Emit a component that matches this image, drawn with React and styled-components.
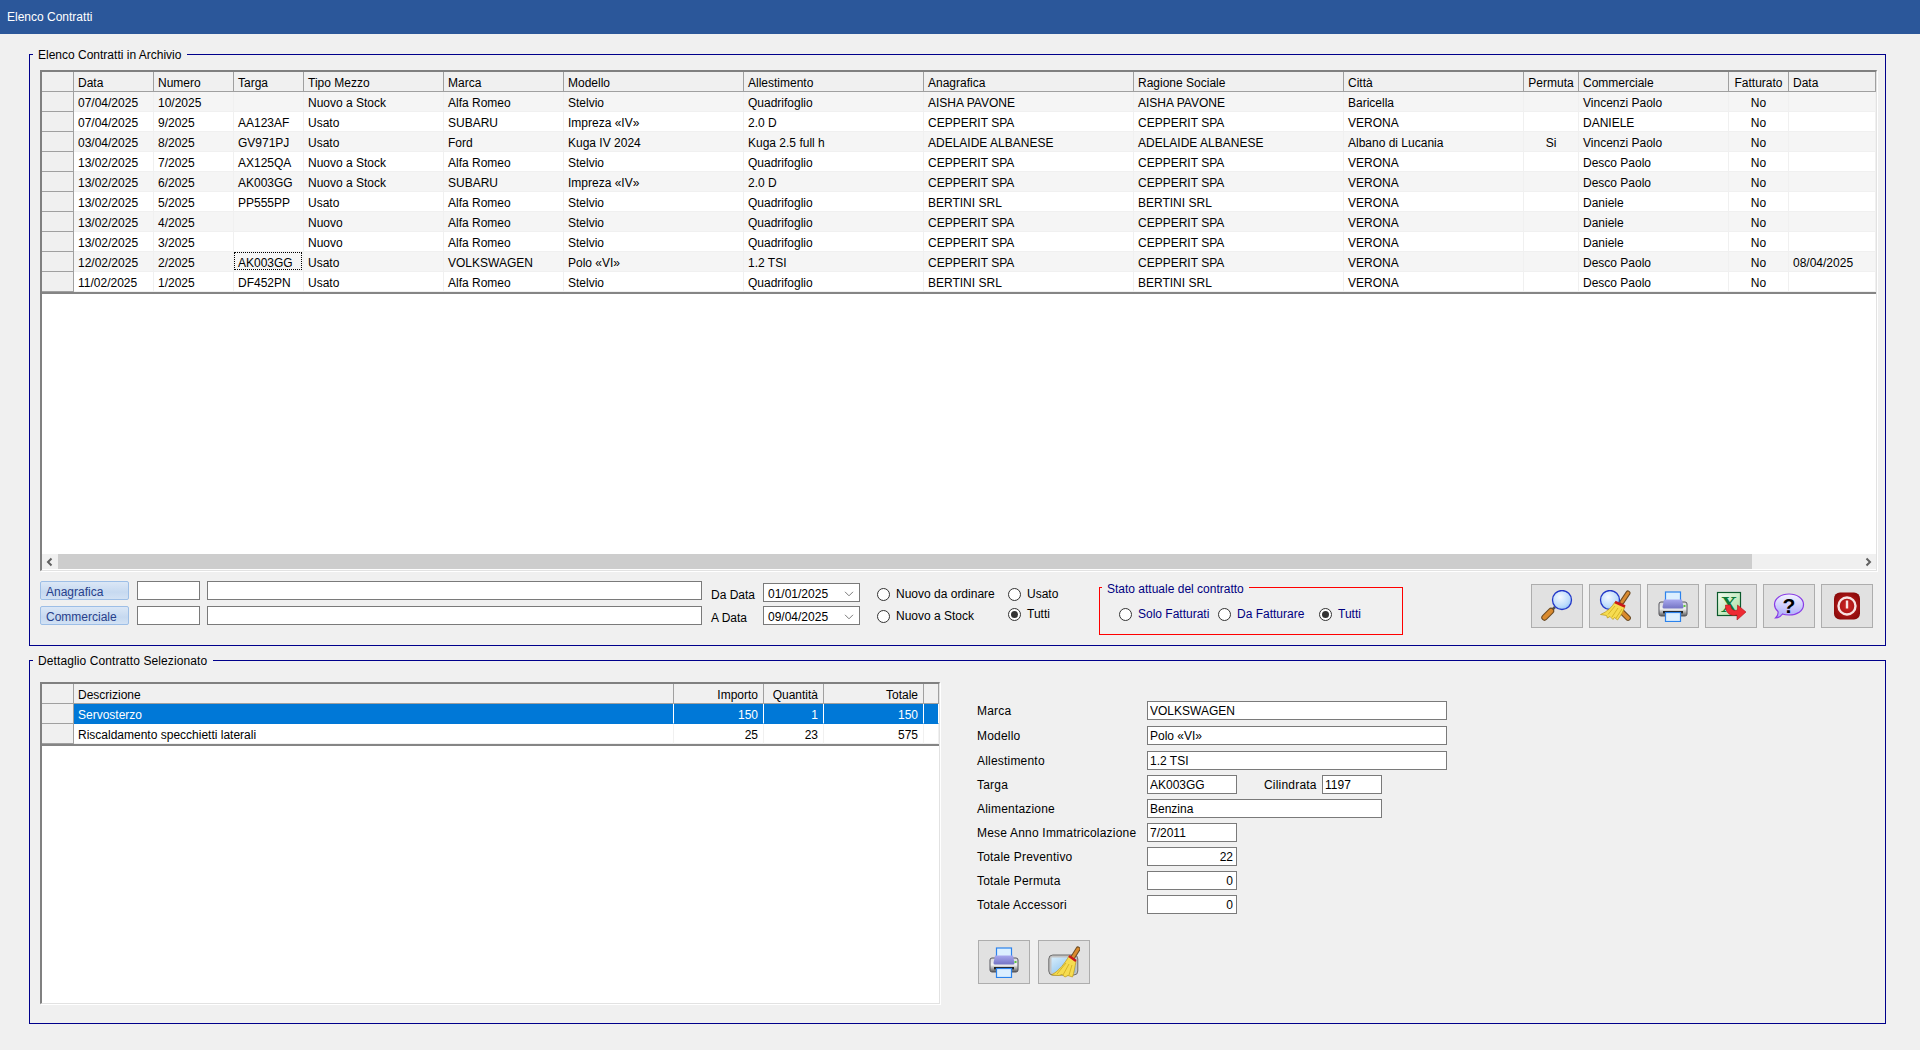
import React from "react";
import styled, { createGlobalStyle } from "styled-components";

const Global = createGlobalStyle`
  html, body { margin: 0; padding: 0; background: #f0f0f0; }
  body { font-family: "Liberation Sans", Arial, sans-serif; font-size: 12px; color: #000; }
  * { box-sizing: border-box; }
`;

const Page = styled.div`
  width: 1920px;
  height: 1050px;
  overflow: hidden;
  display: flex;
  flex-direction: column;
  background: #f0f0f0;
`;
const TitleBar = styled.header`
  height: 34px;
  flex: none;
  background: #2b579a;
  color: #fff;
  display: flex;
  align-items: center;
  padding-left: 7px;
  font-size: 12px;
`;
const Body = styled.main`
  padding: 13px 34px 0 29px;
  display: flex;
  flex-direction: column;
  gap: 7px;
`;
const Group = styled.fieldset`
  margin: 0;
  min-width: 0;
  border: 1px solid #00008b;
  padding: ${(p) => p.$pad};
`;
const GroupLegend = styled.legend`
  margin-left: -7px;
  padding: 0 6px 0 5px;
  height: 14px;
  line-height: 17px;
  white-space: nowrap;
  letter-spacing: ${(p) => p.$ls || 0}px;
`;

/* data grid */
const Frame = styled.div`
  width: ${(p) => p.$w}px;
  height: ${(p) => p.$h}px;
  background: #fff;
  border-top: 2px solid #808080;
  border-left: 2px solid #808080;
  border-right: 1px solid #e2e2e2;
  border-bottom: 1px solid #e2e2e2;
  box-shadow: 1px 1px 0 #fff;
  display: flex;
  flex-direction: column;
  flex: none;
`;
const Rows = styled.div`
  flex: 1;
  min-height: 0;
  overflow: hidden;
`;
const RowLine = styled.div`
  display: grid;
  grid-template-columns: ${(p) => p.$cols};
  height: 20px;
  background: ${(p) => p.$bg};
  color: ${(p) => p.$fg || "#000"};
`;
const EndLine = styled.div`
  height: 2px;
  background: #858585;
`;
const HeadCell = styled.div`
  background: #f0f0f0;
  border-right: 1px solid #a0a0a0;
  border-bottom: 1px solid #a0a0a0;
  padding: 2px ${(p) => (p.$align === "right" ? 5 : 4)}px 0 4px;
  line-height: 18px;
  white-space: nowrap;
  overflow: hidden;
  text-align: ${(p) => p.$align || "left"};
`;
const RowHead = styled.div`
  background: #f0f0f0;
  border-right: 1px solid #a0a0a0;
  border-bottom: 1px solid #a0a0a0;
`;
const Cell = styled.div`
  position: relative;
  border-right: 1px solid ${(p) => (p.$selected ? "#fff" : "#f0f0f0")};
  border-bottom: 1px solid ${(p) => (p.$selected ? "#0078d7" : "#f0f0f0")};
  padding: 2px ${(p) => (p.$align === "right" ? 5 : 4)}px 0 4px;
  line-height: 18px;
  white-space: nowrap;
  overflow: hidden;
  text-align: ${(p) => p.$align || "left"};
  &::after {
    content: "";
    display: ${(p) => (p.$focus ? "block" : "none")};
    position: absolute;
    inset: 0 1px 1px 0;
    border: 1px dotted #000;
  }
`;
const ScrollBar = styled.div`
  flex: none;
  height: 15px;
  margin-bottom: 1px;
  background: #f0f0f0;
  display: flex;
`;
const ScrollArrow = styled.div`
  width: 16px;
  flex: none;
  display: flex;
  align-items: center;
  justify-content: center;
  color: #606060;
`;
const Thumb = styled.div`
  width: 1694px;
  background: #cdcdcd;
`;
const Track = styled.div`
  flex: 1;
`;

/* filter bar */
const FilterBar = styled.div`
  display: flex;
  align-items: flex-start;
  margin-top: 10px;
  height: 47px;
`;
const FilterFields = styled.div`
  display: grid;
  grid-template-columns: 90px 63px 495px;
  column-gap: 7px;
  row-gap: 6px;
  grid-auto-rows: 19px;
  flex: none;
`;
const BlueButton = styled.button`
  font: inherit;
  width: 89px;
  height: 19px;
  padding: 2px 0 0 5px;
  text-align: left;
  color: #27408b;
  background: linear-gradient(#dbe7f6, #c6d9f0 60%, #d3e2f4);
  border: 1px solid #9dbee6;
  border-radius: 2px;
`;
const TextBox = styled.input`
  font: inherit;
  color: #000;
  width: ${(p) => (p.$w ? `${p.$w}px` : "100%")};
  height: 19px;
  padding: 1px 3px 0 2px;
  background: #fff;
  border: 1px solid #7a7a7a;
  border-radius: 0;
  outline: none;
  text-align: ${(p) => p.$align || "left"};
`;
const DateGrid = styled.div`
  display: grid;
  grid-template-columns: 52px 97px;
  grid-auto-rows: 19px;
  row-gap: 4px;
  margin: 2px 0 0 9px;
  flex: none;
`;
const DateLabel = styled.label`
  padding-top: 5px;
  line-height: 14px;
  white-space: nowrap;
`;
const DateBox = styled.div`
  background: #fff;
  border: 1px solid #7a7a7a;
  display: flex;
  align-items: center;
  justify-content: space-between;
  padding: 2px 5px 0 4px;
  color: #7a7a7a;
`;
const DateValue = styled.span`
  color: #000;
`;
const RadioColumn = styled.div`
  display: flex;
  flex-direction: column;
  gap: ${(p) => p.$gap}px;
  width: ${(p) => p.$w}px;
  margin: 6px 0 0 ${(p) => p.$ml || 0}px;
  flex: none;
`;
const RadioItem = styled.label`
  display: flex;
  align-items: center;
  gap: 6px;
  height: 14px;
  white-space: nowrap;
  color: ${(p) => p.$color || "#000"};
`;
const Radio = styled.input.attrs({ type: "radio" })`
  appearance: none;
  margin: 0;
  flex: none;
  width: 13px;
  height: 13px;
  border-radius: 50%;
  border: 1px solid #333;
  background: #fff;
  display: grid;
  place-items: center;
  &::before {
    content: "";
    width: 7px;
    height: 7px;
    border-radius: 50%;
    background: transparent;
  }
  &:checked::before {
    background: #333;
  }
`;
const StatusBox = styled.fieldset`
  margin: 0 0 0 22px;
  width: 304px;
  height: 54px;
  padding: 14px 0 0 19px;
  min-width: 0;
  flex: none;
  border: 1px solid #ff0000;
`;
const StatusLegend = styled.legend`
  margin-left: -17px;
  padding: 0 5px;
  height: 12px;
  line-height: 16px;
  color: #000080;
  white-space: nowrap;
`;
const StatusRadios = styled.div`
  display: grid;
  grid-template-columns: 99px 101px auto;
`;
const ButtonRow = styled.div`
  display: flex;
  gap: ${(p) => p.$gap}px;
  flex: none;
`;
const ActionRow = styled(ButtonRow)`
  margin: 3px 4px 0 auto;
`;
const IconButton = styled.button`
  width: 52px;
  height: 44px;
  padding: 0;
  background: #e1e1e1;
  border: 1px solid #adadad;
  display: flex;
  align-items: center;
  justify-content: center;
  flex: none;
`;

/* detail */
const DetailRow = styled.div`
  display: flex;
  align-items: flex-start;
  gap: 37px;
`;
const Form = styled.div`
  margin-top: 19px;
  display: flex;
  flex-direction: column;
  gap: 5px;
`;
const FormRow = styled.div`
  display: flex;
  align-items: center;
  height: 19px;
  margin-bottom: ${(p) => (p.$extra ? "1px" : "0")};
`;
const FormLabel = styled.label`
  width: ${(p) => p.$w}px;
  margin-left: ${(p) => p.$ml || 0}px;
  flex: none;
  white-space: nowrap;
  letter-spacing: 0.2px;
`;
const FormButtons = styled(ButtonRow)`
  margin-top: 21px;
  margin-left: 1px;
`;

/* icons */
const Handle = ({ x1, y1, x2, y2, w = 5 }) => (
  <g strokeLinecap="round">
    <line x1={x1} y1={y1} x2={x2} y2={y2} stroke="#6b4a22" strokeWidth={w + 1.4} />
    <line x1={x1} y1={y1} x2={x2} y2={y2} stroke="#d98a2e" strokeWidth={w - 0.6} />
  </g>
);
const Glass = ({ cx, cy, r = 9.5 }) => (
  <g>
    <defs>
      <radialGradient id="glassFill" cx="0.4" cy="0.35" r="0.7">
        <stop offset="0" stopColor="#f4f9ff" />
        <stop offset="0.7" stopColor="#bcdcfc" />
        <stop offset="1" stopColor="#8fc2f8" />
      </radialGradient>
    </defs>
    <circle cx={cx} cy={cy} r={r} fill="url(#glassFill)" stroke="#2338c8" strokeWidth="1.3" />
  </g>
);
const Bristles = ({ d }) => (
  <g>
    <path d={d} fill="#f6dc50" stroke="#bb9612" strokeWidth="0.7" strokeLinejoin="round" />
  </g>
);
const SearchIcon = () => (
  <svg width="32" height="32" viewBox="0 0 32 32">
    <line x1="14" y1="17" x2="11" y2="20" stroke="#555" strokeWidth="2.5" />
    <Handle x1="10" y1="21" x2="3.5" y2="27.5" w={5} />
    <Glass cx={21} cy={10} />
  </svg>
);
const ClearSearchIcon = () => (
  <svg width="32" height="32" viewBox="0 0 32 32">
    <Handle x1="22" y1="21" x2="29" y2="28" w={4.4} />
    <Glass cx={11} cy={10} />
    <Handle x1="23" y1="12" x2="29" y2="3" w={3.6} />
    <Bristles d="M16 12 L26 16.5 C24 22 21.5 26 18.5 30 L15.5 27.5 L14 29.5 L11 26.5 L8.5 28 L7.5 25.5 L1.5 24.5 C8 22 13 17 16 12 Z" />
    <path d="M9 24.5 L16 16 M13 27 L19 18 M17 28 L23 19" stroke="#c9a416" strokeWidth="0.7" fill="none" />
    <line x1="16" y1="12" x2="26" y2="16.5" stroke="#c81818" strokeWidth="2.6" />
  </svg>
);
const PrinterIcon = () => (
  <svg width="32" height="32" viewBox="0 0 32 32">
    <defs>
      <linearGradient id="prnBody" x1="0" y1="0" x2="0" y2="1">
        <stop offset="0" stopColor="#d8d8dc" />
        <stop offset="0.5" stopColor="#f2f2f2" />
        <stop offset="1" stopColor="#585858" />
      </linearGradient>
      <linearGradient id="prnTop" x1="0" y1="0" x2="0" y2="1">
        <stop offset="0" stopColor="#a8a8ee" />
        <stop offset="1" stopColor="#7474c4" />
      </linearGradient>
    </defs>
    <rect x="8.5" y="2" width="15" height="11" fill="#dcefff" stroke="#2b82ec" strokeWidth="1.2" />
    <rect x="2" y="12" width="28" height="14" rx="2" fill="url(#prnBody)" stroke="#55555c" strokeWidth="1" />
    <path d="M7 9.5 H25 L26.5 17 Q26.5 18.5 25 18.5 H7 Q5.5 18.5 5.5 17 Z" fill="url(#prnTop)" />
    <rect x="6" y="21" width="20" height="2.4" fill="#222" />
    <rect x="8.5" y="22.5" width="15" height="9" fill="#dcefff" stroke="#2b82ec" strokeWidth="1.2" />
    <rect x="26.5" y="15" width="2" height="2" fill="#5ac83c" />
  </svg>
);
const ExcelIcon = () => (
  <svg width="32" height="32" viewBox="0 0 32 32">
    <defs>
      <linearGradient id="xlsBg" x1="0" y1="0" x2="1" y2="1">
        <stop offset="0" stopColor="#f2fbf0" />
        <stop offset="1" stopColor="#a6dd9c" />
      </linearGradient>
    </defs>
    <rect x="2.5" y="2.5" width="23" height="23" fill="url(#xlsBg)" stroke="#0b5a2c" strokeWidth="1.2" />
    <text x="14" y="22" textAnchor="middle" fontFamily="'Liberation Serif', serif" fontWeight="700" fontSize="23" fill="#0a7a36">X</text>
    <path d="M10.5 15 C10 22 15 27 22 25 L22 30 L31 22 L22.5 15 L22.5 20 C18 21.5 16 19 15.5 15 Z" fill="#ee2a32" stroke="#b0141c" strokeWidth="0.6" strokeLinejoin="round" />
  </svg>
);
const HelpIcon = () => (
  <svg width="32" height="32" viewBox="0 0 32 32">
    <defs>
      <linearGradient id="helpBg" x1="0" y1="0" x2="0" y2="1">
        <stop offset="0" stopColor="#f4f4ff" />
        <stop offset="1" stopColor="#a7a7fa" />
      </linearGradient>
    </defs>
    <path d="M16 4 C24 4 30.5 8.5 30.5 14.5 C30.5 21 24 25 16 25 C13.5 25 11.5 24.8 9.5 24 C8 26 5.5 28 2.5 28 C4.5 26 5.5 24 5 21.5 C2.8 19.5 1.5 17 1.5 14.5 C1.5 8.5 8 4 16 4 Z" fill="url(#helpBg)" stroke="#8a3ce6" strokeWidth="1.2" />
    <text x="16" y="22.5" textAnchor="middle" fontFamily="'Liberation Sans', sans-serif" fontWeight="700" fontSize="21" fill="#000">?</text>
  </svg>
);
const PowerIcon = () => (
  <svg width="32" height="32" viewBox="0 0 32 32">
    <defs>
      <radialGradient id="pwrBg" cx="0.5" cy="0.5" r="0.7">
        <stop offset="0" stopColor="#cf2424" />
        <stop offset="1" stopColor="#7d0505" />
      </radialGradient>
    </defs>
    <rect x="3" y="2.5" width="26" height="27" rx="6" fill="url(#pwrBg)" />
    <circle cx="16" cy="16" r="8.5" fill="none" stroke="#f8e4e4" strokeWidth="2.4" />
    <line x1="16" y1="10.5" x2="16" y2="18.5" stroke="#f8e4e4" strokeWidth="2.4" />
  </svg>
);
const CleanIcon = () => (
  <svg width="32" height="32" viewBox="0 0 32 32">
    <defs>
      <linearGradient id="scr" x1="0" y1="0" x2="1" y2="1">
        <stop offset="0" stopColor="#d6ecfb" />
        <stop offset="1" stopColor="#7fbcec" />
      </linearGradient>
    </defs>
    <rect x="0.8" y="9" width="29" height="20" rx="4" fill="#c4c4c4" stroke="#6c6c6c" strokeWidth="1" />
    <rect x="3.5" y="11.5" width="24" height="15" fill="url(#scr)" />
    <Handle x1="25" y1="11" x2="30" y2="3" w={3.6} />
    <Bristles d="M21 10 L28 15 C27 21 26 27 24.5 31 L20 29.5 L17 31 L14 28.5 L11 29.5 L3.5 29 C11 25 17 17 21 10 Z" />
    <path d="M9 28 L18 17 M15 29 L21 18 M21 29 L24 19" stroke="#c9a416" strokeWidth="0.7" fill="none" />
    <line x1="21" y1="10" x2="28" y2="15" stroke="#c81818" strokeWidth="2.4" />
  </svg>
);
const ArrowL = () => (
  <svg width="10" height="10" viewBox="0 0 10 10"><path d="M6.5 1.5 L3 5 L6.5 8.5" fill="none" stroke="currentColor" strokeWidth="2" /></svg>
);
const ArrowR = () => (
  <svg width="10" height="10" viewBox="0 0 10 10"><path d="M3.5 1.5 L7 5 L3.5 8.5" fill="none" stroke="currentColor" strokeWidth="2" /></svg>
);
const Chevron = () => (
  <svg width="10" height="6" viewBox="0 0 10 6"><path d="M1 0.8 L5 4.8 L9 0.8" fill="none" stroke="currentColor" strokeWidth="1" /></svg>
);

/* data */
const MAIN_COLS = "32px 80px 80px 70px 140px 120px 180px 180px 210px 210px 180px 55px 150px 60px 1fr";
const MAIN_HEAD = ["Data", "Numero", "Targa", "Tipo Mezzo", "Marca", "Modello", "Allestimento", "Anagrafica", "Ragione Sociale", "Città", "Permuta", "Commerciale", "Fatturato", "Data"];
const MAIN_ALIGN = { 10: "center", 12: "center" };
const MAIN_ROWS = [
  ["07/04/2025", "10/2025", "", "Nuovo a Stock", "Alfa Romeo", "Stelvio", "Quadrifoglio", "AISHA PAVONE", "AISHA PAVONE", "Baricella", "", "Vincenzi Paolo", "No", ""],
  ["07/04/2025", "9/2025", "AA123AF", "Usato", "SUBARU", "Impreza «IV»", "2.0 D", "CEPPERIT SPA", "CEPPERIT SPA", "VERONA", "", "DANIELE", "No", ""],
  ["03/04/2025", "8/2025", "GV971PJ", "Usato", "Ford", "Kuga IV 2024", "Kuga 2.5 full h", "ADELAIDE ALBANESE", "ADELAIDE ALBANESE", "Albano di Lucania", "Si", "Vincenzi Paolo", "No", ""],
  ["13/02/2025", "7/2025", "AX125QA", "Nuovo a Stock", "Alfa Romeo", "Stelvio", "Quadrifoglio", "CEPPERIT SPA", "CEPPERIT SPA", "VERONA", "", "Desco Paolo", "No", ""],
  ["13/02/2025", "6/2025", "AK003GG", "Nuovo a Stock", "SUBARU", "Impreza «IV»", "2.0 D", "CEPPERIT SPA", "CEPPERIT SPA", "VERONA", "", "Desco Paolo", "No", ""],
  ["13/02/2025", "5/2025", "PP555PP", "Usato", "Alfa Romeo", "Stelvio", "Quadrifoglio", "BERTINI SRL", "BERTINI SRL", "VERONA", "", "Daniele", "No", ""],
  ["13/02/2025", "4/2025", "", "Nuovo", "Alfa Romeo", "Stelvio", "Quadrifoglio", "CEPPERIT SPA", "CEPPERIT SPA", "VERONA", "", "Daniele", "No", ""],
  ["13/02/2025", "3/2025", "", "Nuovo", "Alfa Romeo", "Stelvio", "Quadrifoglio", "CEPPERIT SPA", "CEPPERIT SPA", "VERONA", "", "Daniele", "No", ""],
  ["12/02/2025", "2/2025", "AK003GG", "Usato", "VOLKSWAGEN", "Polo «VI»", "1.2 TSI", "CEPPERIT SPA", "CEPPERIT SPA", "VERONA", "", "Desco Paolo", "No", "08/04/2025"],
  ["11/02/2025", "1/2025", "DF452PN", "Usato", "Alfa Romeo", "Stelvio", "Quadrifoglio", "BERTINI SRL", "BERTINI SRL", "VERONA", "", "Desco Paolo", "No", ""],
];
const DETAIL_COLS = "32px 600px 90px 60px 100px 1fr";
const DETAIL_HEAD = ["Descrizione", "Importo", "Quantità", "Totale", ""];
const DETAIL_ALIGN = { 1: "right", 2: "right", 3: "right" };
const DETAIL_ROWS = [
  ["Servosterzo", "150", "1", "150", ""],
  ["Riscaldamento specchietti laterali", "25", "23", "575", ""],
];

function DataGrid({ cols, head, align, rows, selected, focus }) {
  return (
    <>
      <RowLine $cols={cols}>
        <HeadCell />
        {head.map((h, i) => (
          <HeadCell key={i} $align={align[i]}>{h}</HeadCell>
        ))}
      </RowLine>
      {rows.map((r, ri) => {
        const isSel = selected === ri;
        return (
          <RowLine
            key={ri}
            $cols={cols}
            $bg={isSel ? "#0078d7" : selected === undefined && ri % 2 === 0 ? "#f5f5f5" : "#fff"}
            $fg={isSel ? "#fff" : undefined}
          >
            <RowHead />
            {r.map((c, ci) => (
              <Cell
                key={ci}
                $align={align[ci]}
                $selected={isSel}
                $focus={focus && focus[0] === ri && focus[1] === ci}
              >
                {c}
              </Cell>
            ))}
          </RowLine>
        );
      })}
      <EndLine />
    </>
  );
}

const TB = ({ value, w, align }) => <TextBox readOnly value={value} $w={w} $align={align} />;
const RadioOpt = ({ label, name, checked, color }) => (
  <RadioItem $color={color}>
    <Radio name={name} defaultChecked={checked} />
    {label}
  </RadioItem>
);

export default function App() {
  return (
    <Page>
      <Global />
      <TitleBar>Elenco Contratti</TitleBar>
      <Body>
        <Group $pad="9px 8px 17px 10px">
          <GroupLegend>Elenco Contratti in Archivio</GroupLegend>
          <Frame $w={1837} $h={501}>
            <Rows>
              <DataGrid cols={MAIN_COLS} head={MAIN_HEAD} align={MAIN_ALIGN} rows={MAIN_ROWS} focus={[8, 2]} />
            </Rows>
            <ScrollBar>
              <ScrollArrow><ArrowL /></ScrollArrow>
              <Thumb />
              <Track />
              <ScrollArrow><ArrowR /></ScrollArrow>
            </ScrollBar>
          </Frame>
          <FilterBar>
            <FilterFields>
              <BlueButton>Anagrafica</BlueButton>
              <TB value="" />
              <TB value="" />
              <BlueButton>Commerciale</BlueButton>
              <TB value="" />
              <TB value="" />
            </FilterFields>
            <DateGrid>
              <DateLabel>Da Data</DateLabel>
              <DateBox><DateValue>01/01/2025</DateValue><Chevron /></DateBox>
              <DateLabel>A Data</DateLabel>
              <DateBox><DateValue>09/04/2025</DateValue><Chevron /></DateBox>
            </DateGrid>
            <RadioColumn $gap={8} $w={131} $ml={17}>
              <RadioOpt name="tipo" label="Nuovo da ordinare" />
              <RadioOpt name="tipo" label="Nuovo a Stock" />
            </RadioColumn>
            <RadioColumn $gap={6} $w={69}>
              <RadioOpt name="tipo" label="Usato" />
              <RadioOpt name="tipo" label="Tutti" checked />
            </RadioColumn>
            <StatusBox>
              <StatusLegend>Stato attuale del contratto</StatusLegend>
              <StatusRadios>
                <RadioOpt name="stato" label="Solo Fatturati" color="#000080" />
                <RadioOpt name="stato" label="Da Fatturare" color="#000080" />
                <RadioOpt name="stato" label="Tutti" color="#000080" checked />
              </StatusRadios>
            </StatusBox>
            <ActionRow $gap={6}>
              <IconButton><SearchIcon /></IconButton>
              <IconButton><ClearSearchIcon /></IconButton>
              <IconButton><PrinterIcon /></IconButton>
              <IconButton><ExcelIcon /></IconButton>
              <IconButton><HelpIcon /></IconButton>
              <IconButton><PowerIcon /></IconButton>
            </ActionRow>
          </FilterBar>
        </Group>
        <Group $pad="15px 8px 19px 10px">
          <GroupLegend $ls={0.1}>Dettaglio Contratto Selezionato</GroupLegend>
          <DetailRow>
            <Frame $w={900} $h={322}>
              <Rows>
                <DataGrid cols={DETAIL_COLS} head={DETAIL_HEAD} align={DETAIL_ALIGN} rows={DETAIL_ROWS} selected={0} />
              </Rows>
            </Frame>
            <Form>
              <FormRow $extra><FormLabel $w={170}>Marca</FormLabel><TB value="VOLKSWAGEN" w={300} /></FormRow>
              <FormRow $extra><FormLabel $w={170}>Modello</FormLabel><TB value="Polo «VI»" w={300} /></FormRow>
              <FormRow><FormLabel $w={170}>Allestimento</FormLabel><TB value="1.2 TSI" w={300} /></FormRow>
              <FormRow>
                <FormLabel $w={170}>Targa</FormLabel><TB value="AK003GG" w={90} />
                <FormLabel $w={58} $ml={27}>Cilindrata</FormLabel><TB value="1197" w={60} />
              </FormRow>
              <FormRow><FormLabel $w={170}>Alimentazione</FormLabel><TB value="Benzina" w={235} /></FormRow>
              <FormRow><FormLabel $w={170}>Mese Anno Immatricolazione</FormLabel><TB value="7/2011" w={90} /></FormRow>
              <FormRow><FormLabel $w={170}>Totale Preventivo</FormLabel><TB value="22" w={90} align="right" /></FormRow>
              <FormRow><FormLabel $w={170}>Totale Permuta</FormLabel><TB value="0" w={90} align="right" /></FormRow>
              <FormRow><FormLabel $w={170}>Totale Accessori</FormLabel><TB value="0" w={90} align="right" /></FormRow>
              <FormButtons $gap={8}>
                <IconButton><PrinterIcon /></IconButton>
                <IconButton><CleanIcon /></IconButton>
              </FormButtons>
            </Form>
          </DetailRow>
        </Group>
      </Body>
    </Page>
  );
}
